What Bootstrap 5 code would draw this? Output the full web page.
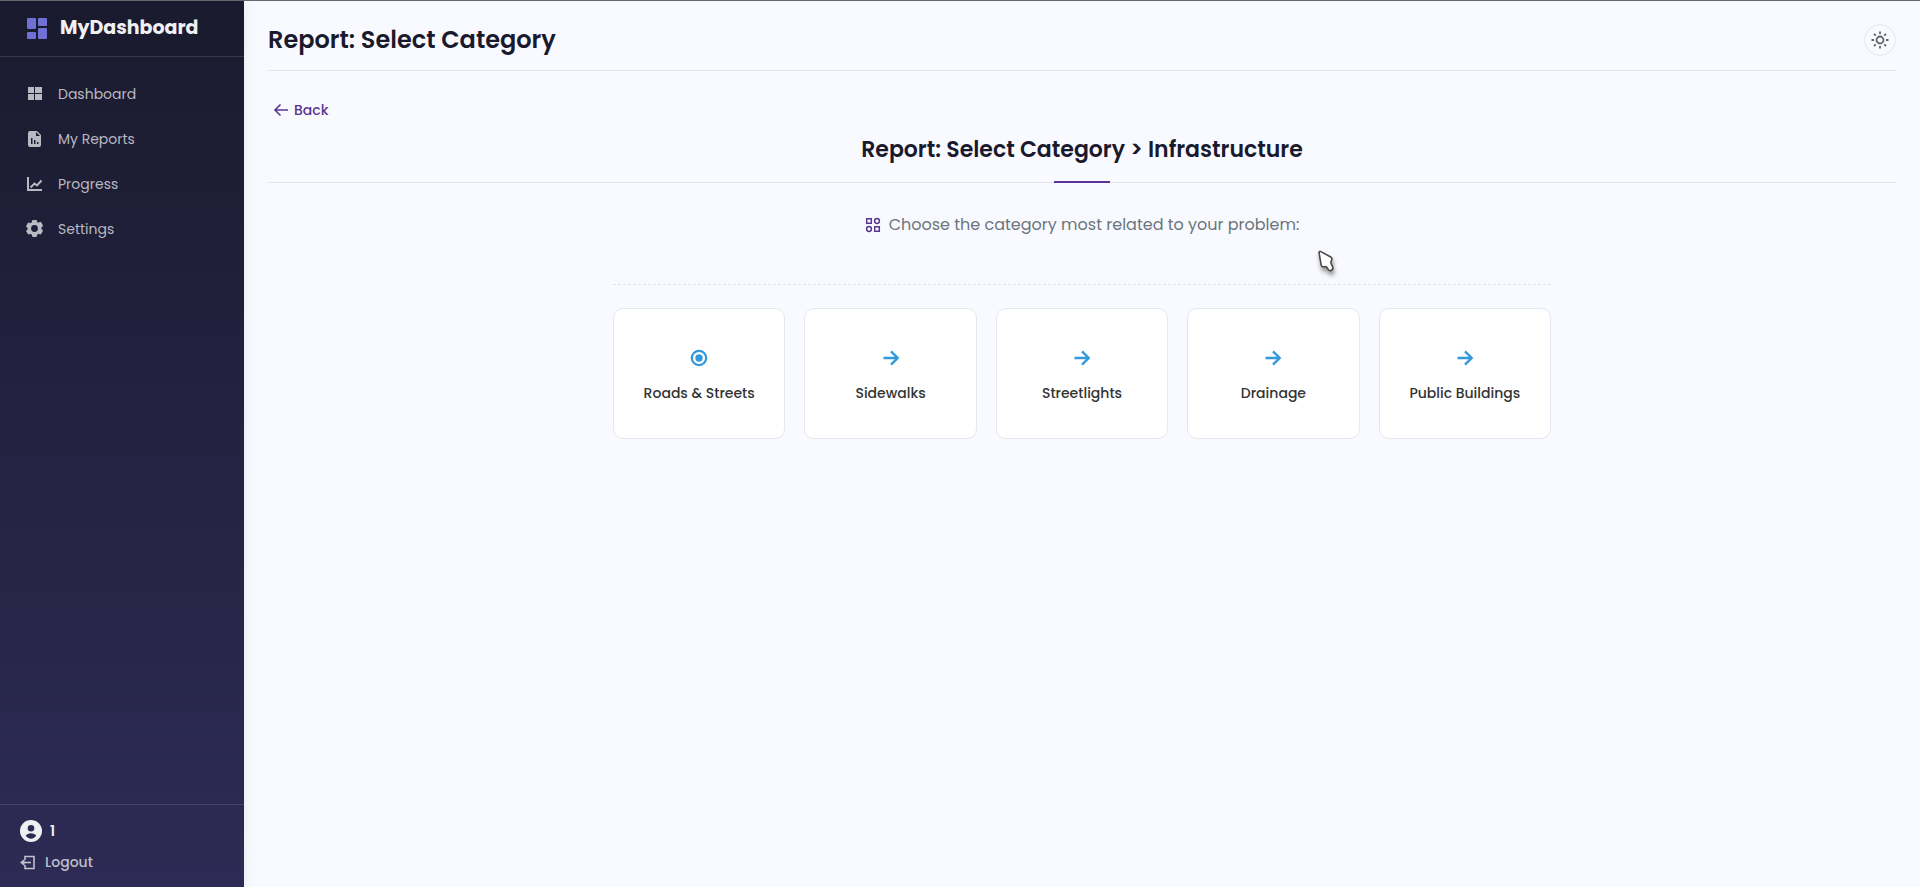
<!DOCTYPE html>
<html lang="en">
<head>
<meta charset="utf-8">
<meta name="viewport" content="width=device-width, initial-scale=1">
<title>Report: Select Category</title>
<link href="https://cdn.jsdelivr.net/npm/bootstrap@5.3.0/dist/css/bootstrap.min.css" rel="stylesheet">
<style>
body { font-family: Poppins, Inter, sans-serif; background: #f9faff; color: #1a1a2e; border-top: 1px solid #66666a; font-size: 14px; line-height: 24px; }
svg { display: block; flex: none; }
.sidebar { width: 244px; background: linear-gradient(180deg, #1a1a2e, #2d2b55); box-shadow: 2px 0 10px rgba(26, 26, 46, .06); z-index: 1; }
.brand { height: 56px; padding: 0 24px 2px; border-bottom: 1px solid rgba(255, 255, 255, .12); color: #f0f0f2; font-size: 19px; font-weight: 700; gap: 9px; }
.brand svg { color: #6f6fd4; }
.side-menu { padding-top: 14px; }
.side-menu .nav-link { height: 45px; padding: 0 26px; gap: 15px; color: #b9b9c1; font-size: 14px; }
.side-foot { border-top: 1px solid rgba(255, 255, 255, .12); padding: 11px 20px 8px; }
.user-name { color: #f0f0f2; font-size: 14px; font-weight: 600; height: 29px; }
.logout { color: #c0bfcc; font-size: 14px; font-weight: 500; height: 34px; }
.content { padding: 0 24px; }
.top-bar { height: 70px; padding-top: 9px; border-bottom: 1px solid #e4e6ec; }
.top-bar h1 { font-size: 24px; line-height: 36px; font-weight: 600; margin: 0; }
.step-title { font-size: 22px; line-height: 36px; font-weight: 600; margin: 0; }
.theme-btn { width: 32px; height: 32px; border: 1px solid #e6e8ee; color: #5d6670; }
.back-btn { margin-top: 27px; padding: 0 5px; color: #5a3692; font-size: 14px; font-weight: 500; line-height: 24px; gap: 5px; }
.step-head { padding: 10px 0 14px; border-bottom: 1px solid #e4e6ec; }
.step-head::after { content: ""; position: absolute; left: 50%; bottom: -1px; width: 56px; height: 2px; margin-left: -28px; background: #5a3692; }
.prompt { padding: 30px 0 47px; color: #6c757d; font-size: 16px; }
.prompt svg { color: #5a3692; }
.picker { max-width: 938px; }
.options { border-top: 1px dashed #e2e4ea; padding-top: 23px; gap: 19px; }
.option { flex: 1 1 0; height: 131px; border: 1px solid #e3e7f0; border-radius: 10px; background: #fff; color: #333; font-size: 14px; font-weight: 500; gap: 15px; padding-bottom: 2px; }
.option svg { color: #3498db; }
.pointer { position: absolute; right: 216px; top: 67px; filter: drop-shadow(1px 4px 2px rgba(0, 0, 0, .4)); }
</style>
</head>
<body class="d-flex min-vh-100">
<aside class="sidebar d-flex flex-column flex-shrink-0">
  <div class="brand d-flex align-items-center">
    <svg width="27" height="28" viewBox="0 0 27 28" fill="currentColor"><rect x="3" y="4" width="9" height="11" rx="1"/><rect x="3" y="18" width="9" height="7" rx="1"/><rect x="14" y="4" width="9" height="8" rx="1"/><rect x="14" y="14" width="9" height="11" rx="1"/></svg>
    <span>MyDashboard</span>
  </div>
  <nav class="side-menu nav flex-column">
    <a class="nav-link d-flex align-items-center" href="#"><svg width="17" height="17" viewBox="0 0 17 17" fill="currentColor"><path d="M2 2h6v6H2zM9 2h7v6H9zM2 9h6v6H2zM9 9h7v6H9z"/></svg>Dashboard</a>
    <a class="nav-link d-flex align-items-center" href="#"><svg width="17" height="17" viewBox="0 0 17 17" fill="currentColor" fill-rule="evenodd"><path d="M4 1h7l4 4v10a2 2 0 0 1-2 2H4a2 2 0 0 1-2-2V3a2 2 0 0 1 2-2zM10 2v4h4zM5 8v6h1.500V8zM8 10v4h1.500v-4zM11 12v2h1.500v-2z"/></svg>My Reports</a>
    <a class="nav-link d-flex align-items-center" href="#"><svg width="17" height="17" viewBox="0 0 17 17" fill="none" stroke="currentColor" stroke-width="2"><path d="M2 2v13h14"/><path d="M4.500 12.500l4-4 2.500 2 4.500-5"/></svg>Progress</a>
    <a class="nav-link d-flex align-items-center" href="#"><svg width="17" height="17" viewBox="2 2 20 20" fill="currentColor"><path fill-rule="evenodd" d="M2.300 15.300l1.700 3a1.400 1.400 0 0 0 1.900.5l1-.6c.6.500 1.300.900 2.100 1.200V20.600c0 .8.600 1.400 1.400 1.400h3.200c.8 0 1.400-.6 1.400-1.400v-1.200c.7-.3 1.400-.7 2.100-1.200l1 .6c.7.400 1.500.2 1.900-.5l1.700-3c.4-.6.100-1.500-.5-1.900l-1-.6a8 8 0 0 0 0-2.400l1-.6c.6-.4.900-1.200.5-1.900l-1.700-3a1.400 1.400 0 0 0-1.900-.5l-1 .6A8 8 0 0 0 15 4.600V3.400C15 2.600 14.400 2 13.600 2h-3.200C9.600 2 9 2.600 9 3.400v1.200c-.8.300-1.500.7-2.100 1.200l-1-.6A1.400 1.400 0 0 0 4 5.700l-1.700 3c-.4.700-.1 1.500.5 1.900l1 .6a8 8 0 0 0 0 2.400l-1 .6c-.6.400-.9 1.100-.5 1.700zM12 8a4 4 0 1 1 0 8 4 4 0 0 1 0-8z"/></svg>Settings</a>
  </nav>
  <div class="side-foot mt-auto">
    <div class="user-name d-flex align-items-center gap-2"><svg width="22" height="22" viewBox="2 2 20 20"><circle cx="12" cy="12" r="10" fill="#f0f0f2"/><circle cx="12" cy="9.500" r="3" fill="#2d2b55"/><path d="M7.200 16.400c.8-1.600 2.700-2.400 4.800-2.400s4 .8 4.800 2.400c-1 1.400-2.800 2.600-4.800 2.600s-3.800-1.200-4.800-2.600z" fill="#2d2b55"/></svg>1</div>
    <a class="logout d-flex align-items-center gap-2 text-decoration-none" href="#"><svg width="17" height="17" viewBox="0 0 17 17" fill="none" stroke="currentColor" stroke-width="1.600"><path d="M5 6V2.500h9v12H5V11"/><path d="M11 8.500H3"/><path d="M0 8.500l4.500-3.500v7z" fill="currentColor" stroke="none"/></svg>Logout</a>
  </div>
</aside>
<main class="content flex-grow-1">
  <header class="top-bar d-flex align-items-center justify-content-between">
    <h1>Report: Select Category</h1>
    <button class="theme-btn btn rounded-circle p-0 d-flex align-items-center justify-content-center" type="button" aria-label="Switch theme"><svg width="18" height="18" viewBox="0 0 18 18" fill="none" stroke="currentColor" stroke-width="1.800"><circle cx="9" cy="9" r="3.500"/><path d="M9 .5v2.500M9 15v2.500M.5 9H3M15 9h2.500M3 3l1.700 1.700M13.300 13.300L15 15M3 15l1.700-1.700M13.300 4.700L15 3"/></svg></button>
  </header>
  <button class="back-btn btn border-0 d-flex align-items-center" type="button"><svg width="16" height="16" viewBox="0 0 16 16" fill="none" stroke="currentColor" stroke-width="1.600"><path d="M15 8H2M7.500 2.500L2 8l5.500 5.500"/></svg>Back</button>
  <div class="step-head position-relative text-center">
    <h2 class="step-title">Report: Select Category &gt; Infrastructure</h2>
  </div>
  <section class="picker mx-auto position-relative">
    <p class="prompt d-flex align-items-center justify-content-center gap-2 mb-0"><svg width="16" height="16" viewBox="0 0 16 16" fill="none" stroke="currentColor" stroke-width="1.500"><path d="M1.700 1.700h4.600v4.600H1.700zM9.700 9.700h4.600v4.600H9.700z"/><circle cx="12" cy="4" r="2.400"/><circle cx="4" cy="12" r="2.400"/></svg>Choose the category most related to your problem:</p>
    <div class="options d-flex">
      <button class="option btn d-flex flex-column align-items-center justify-content-center" type="button"><svg width="20" height="20" viewBox="0 0 20 20" fill="none" stroke="currentColor" stroke-width="2.200"><circle cx="10" cy="10" r="7.200"/><circle cx="10" cy="10" r="3.700" fill="currentColor" stroke="none"/></svg>Roads &amp; Streets</button>
      <button class="option btn d-flex flex-column align-items-center justify-content-center" type="button"><svg width="20" height="20" viewBox="0 0 20 20" fill="none" stroke="currentColor" stroke-width="2.400"><path d="M2.500 10H17M10 3.300l6.700 6.700-6.700 6.700"/></svg>Sidewalks</button>
      <button class="option btn d-flex flex-column align-items-center justify-content-center" type="button"><svg width="20" height="20" viewBox="0 0 20 20" fill="none" stroke="currentColor" stroke-width="2.400"><path d="M2.500 10H17M10 3.300l6.700 6.700-6.700 6.700"/></svg>Streetlights</button>
      <button class="option btn d-flex flex-column align-items-center justify-content-center" type="button"><svg width="20" height="20" viewBox="0 0 20 20" fill="none" stroke="currentColor" stroke-width="2.400"><path d="M2.500 10H17M10 3.300l6.700 6.700-6.700 6.700"/></svg>Drainage</button>
      <button class="option btn d-flex flex-column align-items-center justify-content-center" type="button"><svg width="20" height="20" viewBox="0 0 20 20" fill="none" stroke="currentColor" stroke-width="2.400"><path d="M2.500 10H17M10 3.300l6.700 6.700-6.700 6.700"/></svg>Public Buildings</button>
    </div>
    <svg class="pointer" width="18" height="24" viewBox="0 0 18 24"><path d="M2 2.500c0-1 1-1.400 1.800-.9l9.500 5.200c1.800 1 2.200 2.400 1.200 3.600-.8 1-1.200 2-.4 3.200l1.700 3.600c.6 1.400-.4 2.400-1.400 3-1.200.7-2.600.5-3.200-.7l-1-1.800c-.5-1-1.600-1.300-2.800-1-1.800.4-3-.2-3.300-2z" fill="#fff" stroke="#4a4a4a" stroke-width="1.600"/></svg>
  </section>
</main>
<script src="https://cdn.jsdelivr.net/npm/bootstrap@5.3.0/dist/js/bootstrap.bundle.min.js"></script>
</body>
</html>
